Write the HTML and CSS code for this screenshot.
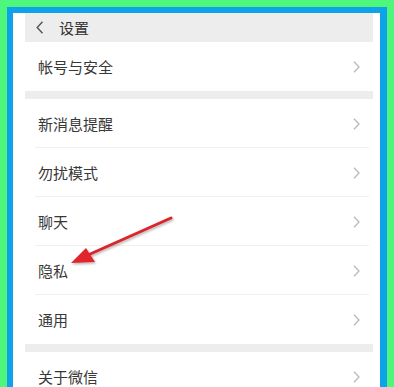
FILE: index.html
```html
<!DOCTYPE html>
<html lang="zh">
<head>
<meta charset="utf-8">
<title>设置</title>
<link rel="stylesheet" href="styles.css">
</head>
<body>
<div class="frame">
  <div class="inner">
    <div class="screen">
      <div class="content">
        <div class="header">
          <svg class="back" width="8" height="13" viewBox="0 0 8 13"><polyline points="6.5,0.8 1.2,6.5 6.5,12.2" fill="none" stroke="#555" stroke-width="1.4"/></svg>
          <span class="title">设置</span>
        </div>
        <div class="group">
          <div class="row"><span>帐号与安全</span><svg class="chev" width="7" height="12" viewBox="0 0 7 12"><polyline points="1,0.8 6,6 1,11.2" fill="none" stroke="#b9b9b9" stroke-width="1.3"/></svg></div>
        </div>
        <div class="gap"></div>
        <div class="group">
          <div class="row line"><span>新消息提醒</span><svg class="chev" width="7" height="12" viewBox="0 0 7 12"><polyline points="1,0.8 6,6 1,11.2" fill="none" stroke="#b9b9b9" stroke-width="1.3"/></svg></div>
          <div class="row line"><span>勿扰模式</span><svg class="chev" width="7" height="12" viewBox="0 0 7 12"><polyline points="1,0.8 6,6 1,11.2" fill="none" stroke="#b9b9b9" stroke-width="1.3"/></svg></div>
          <div class="row line"><span>聊天</span><svg class="chev" width="7" height="12" viewBox="0 0 7 12"><polyline points="1,0.8 6,6 1,11.2" fill="none" stroke="#b9b9b9" stroke-width="1.3"/></svg></div>
          <div class="row line"><span>隐私</span><svg class="chev" width="7" height="12" viewBox="0 0 7 12"><polyline points="1,0.8 6,6 1,11.2" fill="none" stroke="#b9b9b9" stroke-width="1.3"/></svg></div>
          <div class="row"><span>通用</span><svg class="chev" width="7" height="12" viewBox="0 0 7 12"><polyline points="1,0.8 6,6 1,11.2" fill="none" stroke="#b9b9b9" stroke-width="1.3"/></svg></div>
        </div>
        <div class="gap"></div>
        <div class="group">
          <div class="row"><span>关于微信</span><svg class="chev" width="7" height="12" viewBox="0 0 7 12"><polyline points="1,0.8 6,6 1,11.2" fill="none" stroke="#b9b9b9" stroke-width="1.3"/></svg></div>
        </div>
      </div>
      <svg class="arrow" width="394" height="387" viewBox="0 0 394 387">
        <defs>
          <filter id="sh" x="-10%" y="-10%" width="130%" height="130%">
            <feDropShadow dx="1" dy="1.5" stdDeviation="1.2" flood-color="#000" flood-opacity="0.3"/>
          </filter>
        </defs>
        <g filter="url(#sh)">
          <line x1="171" y1="218" x2="88" y2="255" stroke="#d9262c" stroke-width="3" stroke-linecap="round"/>
          <polygon points="71,263 86,248 95,262" fill="#e0262c"/>
        </g>
      </svg>
    </div>
  </div>
</div>
</body>
</html>
```

FILE: styles.css
```css
* { box-sizing: border-box; }
html, body {
  margin: 0;
  padding: 0;
  width: 394px;
  height: 387px;
  overflow: hidden;
  font-family: "Noto Sans CJK SC", "Noto Sans", sans-serif;
}
.frame {
  background: #4ef67c;
  padding: 7px 7px 0 7px;
  height: 387px;
}
.inner {
  background: #0ea2e8;
  padding: 6px 7px 0 6px;
  height: 380px;
}
.screen {
  background: #ffffff;
  padding: 0 7px 0 12px;
  height: 374px;
  overflow: hidden;
}
.content {
  display: flex;
  flex-direction: column;
}
.header {
  height: 29px;
  background: #ededed;
  display: flex;
  align-items: center;
  padding-left: 11px;
}
.back { margin-right: 15px; }
.title {
  font-size: 15px;
  color: #333;
  line-height: 1;
}
.group { background: #fff; }
.row {
  height: 49px;
  display: flex;
  align-items: center;
  justify-content: space-between;
  padding: 0 13px 0 13px;
  font-size: 15px;
  color: #383838;
  position: relative;
}
.row.line::after {
  content: "";
  position: absolute;
  left: 10px;
  right: 4px;
  bottom: 0;
  height: 1px;
  background: #efefef;
}
.gap {
  height: 8px;
  background: #ededed;
}
.chev { display: block; }
.arrow {
  position: absolute;
  left: 0;
  top: 0;
  pointer-events: none;
}
```
